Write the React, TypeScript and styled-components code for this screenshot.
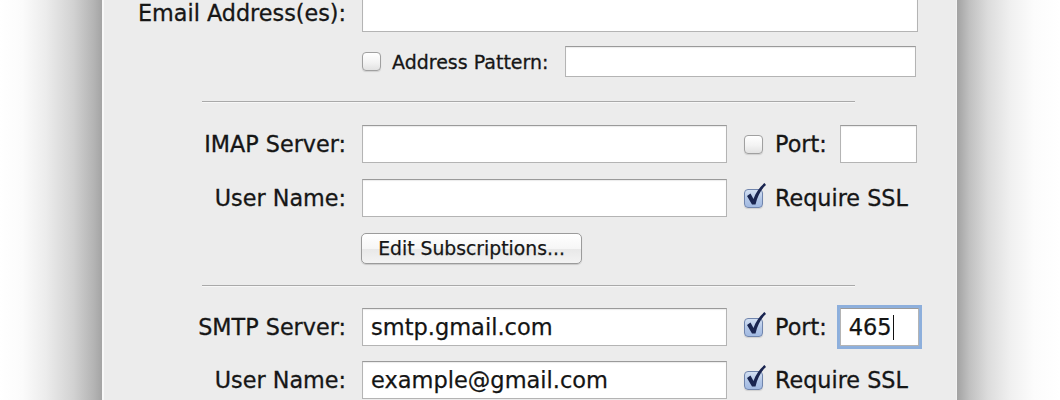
import styled, { createGlobalStyle } from "styled-components";

const GlobalStyle = createGlobalStyle`
  html, body {
    margin: 0;
    padding: 0;
    background: #ffffff;
  }
  body {
    font-family: "DejaVu Sans", "Liberation Sans", sans-serif;
    color: #1a1a1a;
  }
`;

const Screen = styled.div`
  display: flex;
  width: 1060px;
  height: 400px;
  overflow: hidden;
`;

const LeftShade = styled.div`
  width: 102px;
  flex: none;
  background: linear-gradient(
    to right,
    #ffffff 0%,
    #fbfbfb 22%,
    #ececec 45%,
    #d2d2d2 72%,
    #b4b4b4 92%,
    #a4a4a4 100%
  );
`;

const RightShade = styled.div`
  flex: 1;
  background: linear-gradient(
    to right,
    #a2a2a2 0%,
    #c0c0c0 12%,
    #dcdcdc 30%,
    #f0f0f0 52%,
    #fcfcfc 75%,
    #ffffff 100%
  );
`;

const Panel = styled.div`
  width: 852px;
  flex: none;
  background: #ececec;
  border-left: 2px solid #f8f8f8;
  border-right: 1px solid #f2f2f2;
  display: flex;
  flex-direction: column;
`;

const Row = styled.div<{ $top: number }>`
  display: flex;
  align-items: center;
  margin-top: ${(p) => p.$top}px;
`;

const SubRow = styled(Row)`
  padding-left: 258px;
`;

const Label = styled.label`
  width: 258px;
  box-sizing: border-box;
  padding-right: 16px;
  text-align: right;
  font-size: 22.3px;
  white-space: nowrap;
  color: #161616;
  -webkit-text-stroke: 0.3px #161616;
`;

const TextBox = styled.div<{ $width: number; $height?: number; $focused?: boolean }>`
  width: ${(p) => p.$width}px;
  height: ${(p) => p.$height ?? 38}px;
  box-sizing: border-box;
  flex: none;
  background: #ffffff;
  border: 1px solid #b4b4b4;
  border-top-color: #9a9a9a;
  box-shadow: ${(p) =>
    p.$focused
      ? "0 0 0 1px #8fb1de, 0 0 0 3px rgba(110, 155, 215, 0.75)"
      : "inset 0 1px 1px rgba(0, 0, 0, 0.08)"};
  display: flex;
  align-items: center;
  padding-left: 8px;
  font-size: 22.5px;
  color: #141414;
  -webkit-text-stroke: 0.25px #141414;
  white-space: nowrap;
`;

const Caret = styled.span`
  display: inline-block;
  width: 1.5px;
  height: 25px;
  background: #111;
  margin-left: 1px;
`;

const CheckWrap = styled.span`
  position: relative;
  width: 19px;
  height: 19px;
  flex: none;
`;

const Box = styled.span<{ $checked?: boolean }>`
  display: block;
  width: 19px;
  height: 19px;
  box-sizing: border-box;
  border-radius: 4px;
  border: 1.5px solid ${(p) => (p.$checked ? "#7085ad" : "#a0a0a0")};
  background: ${(p) =>
    p.$checked
      ? "linear-gradient(to bottom, #d3e0f3 0%, #b2c6e7 55%, #a2bae2 100%)"
      : "linear-gradient(to bottom, #ffffff 0%, #f3f3f3 55%, #e2e2e2 100%)"};
  box-shadow: 0 1px 1px rgba(0, 0, 0, 0.12);
`;

const Tick = styled.svg`
  position: absolute;
  left: 2px;
  top: -6px;
  overflow: visible;
`;

const Checkbox = ({ checked }: { checked?: boolean }) => (
  <CheckWrap>
    <Box $checked={checked} />
    {checked && (
      <Tick width="20" height="24" viewBox="0 0 20 24">
        <path
          d="M1 13 L4.5 10.5 L7.5 16 C9.8 9.5 13.5 4 18.5 0 L20 2 C15 6.5 11.5 13 9.5 21.5 L6 21.5 Z"
          fill="#1a2550"
        />
      </Tick>
    )}
  </CheckWrap>
);

const OptionText = styled.span<{ $small?: boolean }>`
  margin-left: ${(p) => (p.$small ? 11 : 12)}px;
  font-size: ${(p) => (p.$small ? 19 : 22.3)}px;
  color: #161616;
  -webkit-text-stroke: 0.3px #161616;
  white-space: nowrap;
`;

const SideGap = styled.span`
  width: 17px;
  flex: none;
`;

const PortBox = styled(TextBox)`
  margin-left: 13px;
`;

const PatternBox = styled(TextBox)`
  margin-left: 17px;
`;

const Separator = styled.div<{ $top: number }>`
  margin: ${(p) => p.$top}px 101px 0 98px;
  height: 1px;
  background: #a9a9a9;
  border-bottom: 1px solid #f7f7f7;
`;

const PushButton = styled.button`
  margin-left: 257px;
  width: 221px;
  height: 31px;
  box-sizing: border-box;
  border: 1px solid #9b9b9b;
  border-radius: 5px;
  background: linear-gradient(to bottom, #ffffff 0%, #f6f6f6 50%, #e8e8e8 51%, #f3f3f3 100%);
  box-shadow: 0 1px 1px rgba(0, 0, 0, 0.15);
  font-family: "DejaVu Sans", "Liberation Sans", sans-serif;
  font-size: 18.8px;
  color: #161616;
  -webkit-text-stroke: 0.25px #161616;
  padding: 0;
`;

export default function App() {
  return (
    <Screen>
      <GlobalStyle />
      <LeftShade />
      <Panel>
        <Row $top={-6}>
          <Label>Email Address(es):</Label>
          <TextBox $width={556} />
        </Row>
        <SubRow $top={14}>
          <Checkbox />
          <OptionText $small>Address Pattern:</OptionText>
          <PatternBox $width={351} $height={31} />
        </SubRow>

        <Separator $top={24} />

        <Row $top={22}>
          <Label>IMAP Server:</Label>
          <TextBox $width={365} />
          <SideGap />
          <Checkbox />
          <OptionText>Port:</OptionText>
          <PortBox $width={77} />
        </Row>
        <Row $top={16}>
          <Label>User Name:</Label>
          <TextBox $width={365} />
          <SideGap />
          <Checkbox checked />
          <OptionText>Require SSL</OptionText>
        </Row>
        <Row $top={16}>
          <PushButton>Edit Subscriptions...</PushButton>
        </Row>

        <Separator $top={21} />

        <Row $top={21}>
          <Label>SMTP Server:</Label>
          <TextBox $width={365}>smtp.gmail.com</TextBox>
          <SideGap />
          <Checkbox checked />
          <OptionText>Port:</OptionText>
          <PortBox $width={79} $focused>
            465
            <Caret />
          </PortBox>
        </Row>
        <Row $top={15}>
          <Label>User Name:</Label>
          <TextBox $width={365}>example@gmail.com</TextBox>
          <SideGap />
          <Checkbox checked />
          <OptionText>Require SSL</OptionText>
        </Row>
      </Panel>
      <RightShade />
    </Screen>
  );
}
